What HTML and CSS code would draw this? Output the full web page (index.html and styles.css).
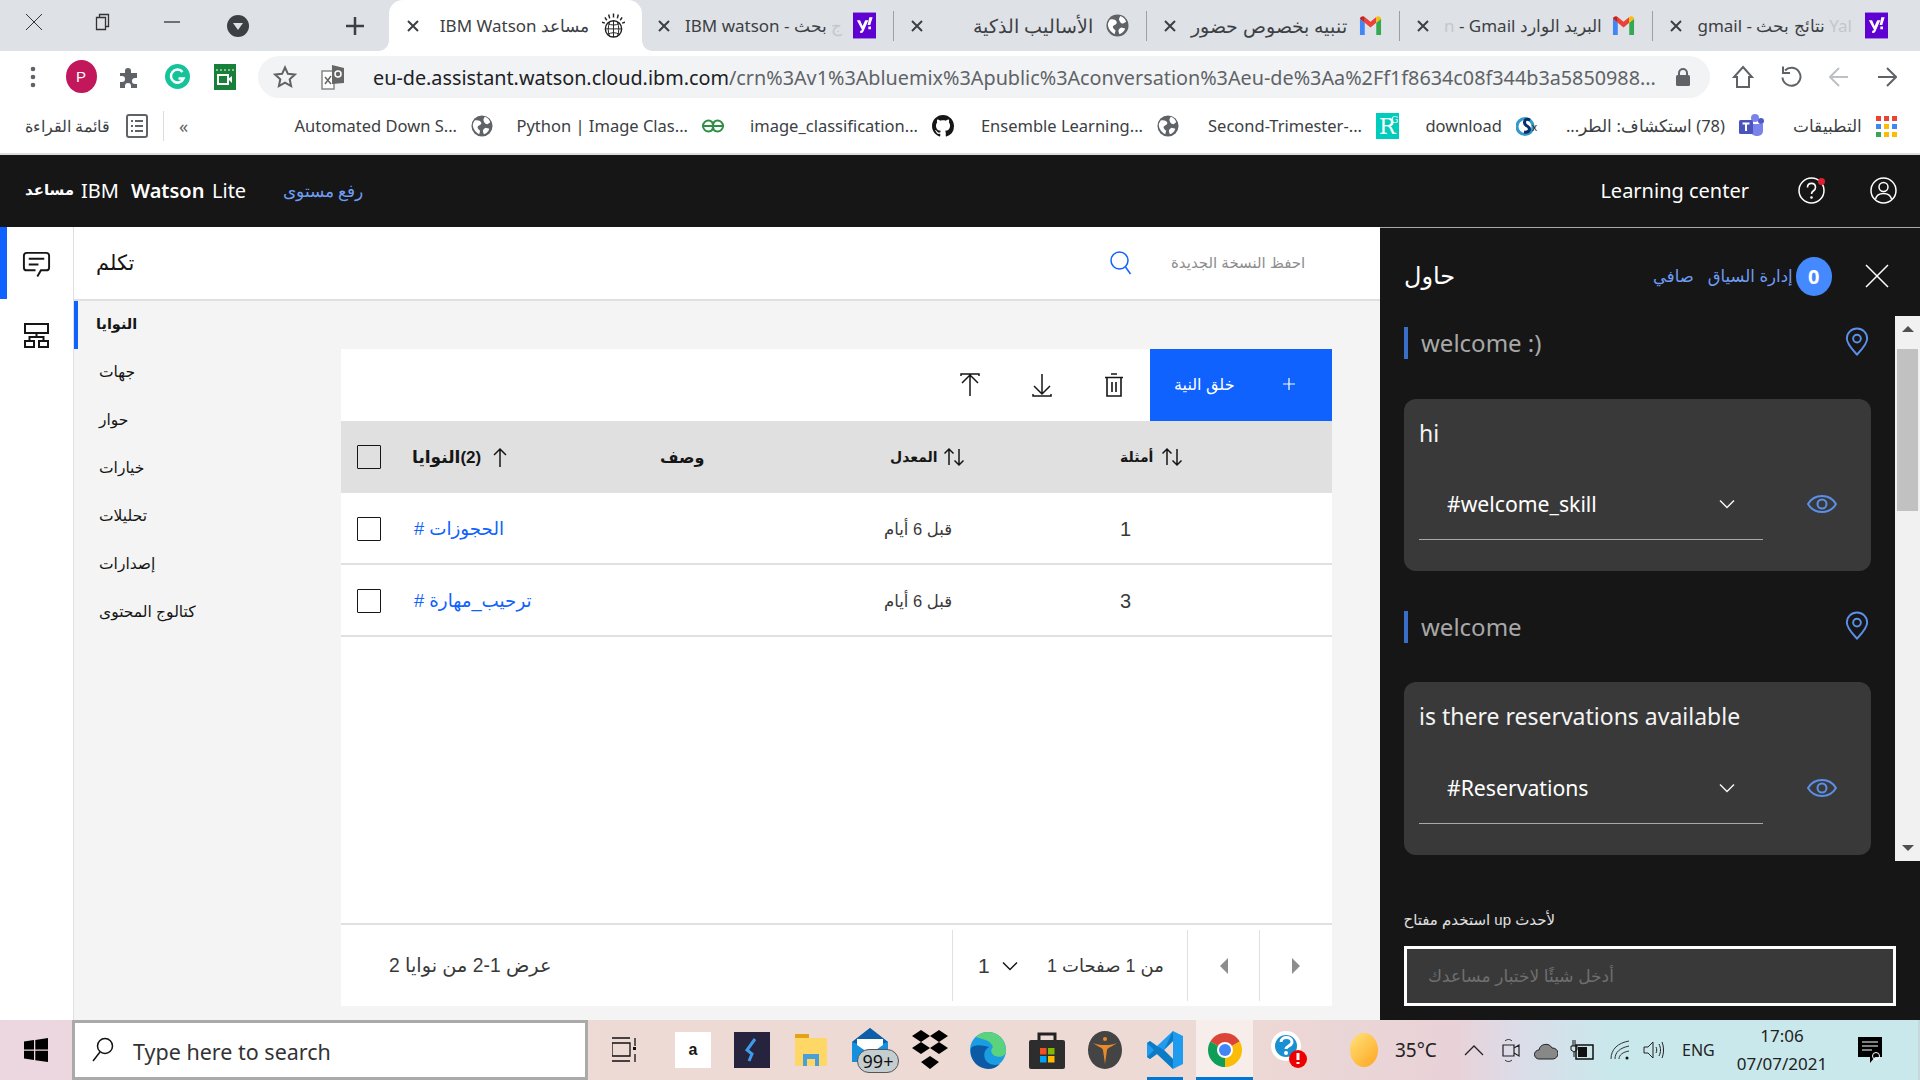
FILE: index.html
```html
<!DOCTYPE html>
<html lang="ar">
<head>
<meta charset="utf-8">
<title>IBM Watson مساعد</title>
<link rel="stylesheet" href="styles.css">
</head>
<body dir="ltr">
<svg class="defs" width="0" height="0">
  <symbol id="globe" viewBox="0 0 24 24"><circle cx="12" cy="12" r="11.500" fill="#5f6368"/><path d="M4 6c3-1 6 0 7 2s-1 3-3 4 0 4 2 5l-1 4C5 19 2 15 2 11c0-2 1-3 2-5zM15 2c3 1 5 3 6 6l-3 2c-2 0-3-1-4-3s0-3 1-5zM16 14l4 1c-1 3-3 5-6 6l-1-3c0-2 1-3 3-4z" fill="#fff"/></symbol>
  <symbol id="yahoo" viewBox="0 0 24 27"><rect width="24" height="27" fill="#5f01d1"/><path d="M4 8h3.400L10 14l2.700-6H16l-5 11.500c-.6 1.300-1.700 2-3.500 1.800v-2.300c1 0 1.500-.2 1.800-1zM17 5h3.500L18 13h-2.700zM16 14.500h2.800v3H16z" fill="#fff"/></symbol>
  <symbol id="gmail" viewBox="0 0 24 24"><path d="M1 22V5l5 4v13z" fill="#4285f4"/><path d="M23 22V5l-5 4v13z" fill="#34a853"/><path d="M6 9V3l6 5 6-5v6l-6 5z" fill="#ea4335"/><path d="M1 5c0-2 3-3.500 5-2v6z" fill="#c5221f"/><path d="M23 5c0-2-3-3.500-5-2v6z" fill="#fbbc04"/></symbol>
  <symbol id="close" viewBox="0 0 16 16"><path d="M3 3l10 10M13 3L3 13" stroke="#3c4043" stroke-width="2" fill="none"/></symbol>
  <symbol id="sort" viewBox="0 0 22 20"><path d="M6 18V2M1.500 6.500L6 2l4.500 4.500M16 2v16M11.500 13.500L16 18l4.500-4.500" stroke="#161616" stroke-width="1.500" fill="none"/></symbol>
  <symbol id="pin" viewBox="0 0 24 30"><path d="M12 28.500C7 23 1.500 18 1.500 12a10.500 10.500 0 0 1 21 0c0 6-5.500 11-10.500 16.500z" stroke="#5b8fe8" stroke-width="2" fill="none"/><circle cx="12" cy="12" r="4" stroke="#5b8fe8" stroke-width="2" fill="none"/></symbol>
  <symbol id="eye" viewBox="0 0 30 20"><path d="M1 10C4 5 9 2 15 2s11 3 14 8c-3 5-8 8-14 8S4 15 1 10z" stroke="#5b8fe8" stroke-width="2" fill="none"/><circle cx="15" cy="10" r="4.500" stroke="#5b8fe8" stroke-width="2" fill="none"/></symbol>
  <symbol id="chev" viewBox="0 0 16 10"><path d="M1 1.500l7 7 7-7" stroke="currentColor" stroke-width="1.500" fill="none"/></symbol>
</svg>

<div class="page">
  <header class="tabstrip">
    <div class="winctl ctl-close"><svg width="18" height="18" viewBox="0 0 18 18"><path d="M1 1l16 16M17 1L1 17" stroke="#333" stroke-width="1"/></svg></div>
    <div class="winctl ctl-restore"><svg width="16" height="18" viewBox="0 0 16 18"><path d="M1.500 4.500h9v12h-9zM4.500 4.500v-3h9v12h-3" stroke="#333" fill="none" stroke-width="1.300"/></svg></div>
    <div class="winctl ctl-min"><svg width="16" height="2" viewBox="0 0 16 2"><path d="M0 1h16" stroke="#333" stroke-width="1.300"/></svg></div>
    <div class="winctl ctl-drop"><svg width="22" height="22" viewBox="0 0 22 22"><circle cx="11" cy="11" r="11" fill="#3c4043"/><path d="M6 8h10l-5 7z" fill="#dee1e6"/></svg></div>
    <div class="winctl ctl-new"><svg width="20" height="20" viewBox="0 0 20 20"><path d="M10 1v18M1 10h18" stroke="#3c4043" stroke-width="2.500"/></svg></div>

    <div class="tab tab-active">
      <svg class="tab-x" width="16" height="16"><use href="#close"/></svg>
      <span class="tab-title">IBM Watson مساعد</span>
      <svg class="fav" width="23" height="26" viewBox="0 0 24 26"><circle cx="12" cy="16" r="8.500" fill="none" stroke="#222" stroke-width="1.500"/><path d="M3.500 16h17M12 7.500v17M6 10.500c4 2 8 2 12 0M6 21.500c4-2 8-2 12 0M8 9c-2 5-2 10 0 15M16 9c2 5 2 10 0 15" stroke="#222" fill="none"/><path d="M12 0v4M7 1l1 4M17 1l-1 4M3 4l2 3M21 4l-2 3M0 9l3 1M24 9l-3 1" stroke="#222" stroke-width="1.500"/></svg>
    </div>
    <div class="tab">
      <svg class="tab-x" width="16" height="16"><use href="#close"/></svg>
      <span class="tab-title">IBM watson - <span class="fade">ج</span> بحث</span>
      <svg class="fav" width="23" height="27"><use href="#yahoo"/></svg>
    </div>
    <i class="tab-sep"></i>
    <div class="tab">
      <svg class="tab-x" width="16" height="16"><use href="#close"/></svg>
      <span class="tab-title tab-ar">الأساليب الذكية</span>
      <svg class="fav" width="23" height="23"><use href="#globe"/></svg>
    </div>
    <i class="tab-sep"></i>
    <div class="tab">
      <svg class="tab-x" width="16" height="16"><use href="#close"/></svg>
      <span class="tab-title tab-ar">تنبيه بخصوص حضور</span>
      <svg class="fav" width="23" height="23"><use href="#gmail"/></svg>
    </div>
    <i class="tab-sep"></i>
    <div class="tab">
      <svg class="tab-x" width="16" height="16"><use href="#close"/></svg>
      <span class="tab-title"><span class="fade">n</span> - Gmail البريد الوارد</span>
      <svg class="fav" width="23" height="23"><use href="#gmail"/></svg>
    </div>
    <i class="tab-sep"></i>
    <div class="tab">
      <svg class="tab-x" width="16" height="16"><use href="#close"/></svg>
      <span class="tab-title">gmail - نتائج بحث <span class="fade">Yal</span></span>
      <svg class="fav" width="23" height="27"><use href="#yahoo"/></svg>
    </div>
  </header>

  <nav class="toolbar">
    <div class="tool"><svg width="6" height="24" viewBox="0 0 6 24"><circle cx="3" cy="4" r="2.300" fill="#5f6368"/><circle cx="3" cy="12" r="2.300" fill="#5f6368"/><circle cx="3" cy="20" r="2.300" fill="#5f6368"/></svg></div>
    <div class="tool"><span class="avatar">P</span></div>
    <div class="tool"><svg width="24" height="24" viewBox="0 0 24 24"><path d="M3 8h5V6a3 3 0 0 1 6 0v2h6v5h-2a3 3 0 0 0 0 6h2v4h-6v-2a3 3 0 0 0-6 0v2H3v-6h2a3 3 0 0 0 0-6H3z" fill="#5f6368"/></svg></div>
    <div class="tool"><svg width="25" height="25" viewBox="0 0 25 25"><circle cx="12.500" cy="12.500" r="12.500" fill="#15c39a"/><path d="M17.500 8a6.500 6.500 0 1 0 1 6.500h-5" stroke="#fff" stroke-width="2.500" fill="none"/></svg></div>
    <div class="tool"><svg width="22" height="26" viewBox="0 0 22 26"><rect width="22" height="26" fill="#188038"/><path d="M2 6h18" stroke="#fff" stroke-dasharray="2 2"/><rect x="4" y="11" width="10" height="9" fill="none" stroke="#fff" stroke-width="2"/><path d="M14 15l4-3v7z" fill="#fff"/></svg></div>
    <div class="omnibox">
      <div class="tool"><svg width="24" height="24" viewBox="0 0 24 24"><path d="M12 2.500l2.900 6.300 6.900.8-5.100 4.700 1.400 6.800L12 17.700 5.900 21.100l1.400-6.800L2.200 9.600l6.900-.8z" stroke="#5f6368" stroke-width="2" fill="none"/></svg></div>
      <div class="tool"><svg width="24" height="26" viewBox="0 0 24 26"><path d="M1 7h12v18H1z" fill="#fff" stroke="#888" stroke-width="1.500"/><path d="M11 1l12 3v15l-12 1z" fill="#666"/><circle cx="17" cy="10" r="3" fill="none" stroke="#fff" stroke-width="1.500"/><path d="M4 13l6 7M10 12l-6 8" stroke="#666" stroke-width="1.500"/></svg></div>
      <div class="url"><span class="url-host">eu-de.assistant.watson.cloud.ibm.com</span>/crn%3Av1%3Abluemix%3Apublic%3Aconversation%3Aeu-de%3Aa%2Ff1f8634c08f344b3a5850988...</div>
      <div class="tool-lock"><svg width="14" height="18" viewBox="0 0 14 18"><path d="M3 7V5a4 4 0 0 1 8 0v2" stroke="#5f6368" stroke-width="2" fill="none"/><rect y="7" width="14" height="11" rx="1.500" fill="#5f6368"/></svg></div>
    </div>
    <div class="tool-right">
      <div class="tool"><svg width="22" height="24" viewBox="0 0 22 24"><path d="M11 2l9 10h-3v10H5V12H2z" stroke="#5f6368" stroke-width="2" fill="none"/></svg></div>
      <div class="tool"><svg width="22" height="24" viewBox="0 0 22 24"><path d="M5 5.500a9 9 0 1 1-2.500 7" stroke="#5f6368" stroke-width="2" fill="none"/><path d="M3 1.500V8h7" stroke="#5f6368" stroke-width="2" fill="none"/></svg></div>
      <div class="tool"><svg width="20" height="22" viewBox="0 0 20 22"><path d="M19 11H2M10 2l-9 9 9 9" stroke="#bdc1c6" stroke-width="2" fill="none"/></svg></div>
      <div class="tool"><svg width="20" height="22" viewBox="0 0 20 22"><path d="M1 11h17M10 2l9 9-9 9" stroke="#5f6368" stroke-width="2" fill="none"/></svg></div>
    </div>
  </nav>

  <div class="bookmarks">
    <div class="bm bm-reading"><span>قائمة القراءة</span>
      <svg width="22" height="24" viewBox="0 0 22 24"><rect x="1" y="1" width="20" height="22" rx="2" fill="none" stroke="#5f6368" stroke-width="2"/><path d="M5 7h2M9 7h8M5 12h2M9 12h8M5 17h2M9 17h8" stroke="#5f6368" stroke-width="2"/></svg>
    </div>
    <i class="bm-sep"></i>
    <div class="bm-more">«</div>
    <div class="bm bm-auto"><span>Automated Down S...</span><svg width="22" height="22"><use href="#globe"/></svg></div>
    <div class="bm bm-python"><span>Python | Image Clas...</span><svg width="22" height="14" viewBox="0 0 22 14"><path d="M0 7h22M11 7C11 3 9 1.500 6.500 1.500a5.500 5.500 0 0 0 0 11c2.500 0 4.500-1.500 4.500-5.500zM11 7c0-4 2-5.500 4.500-5.500a5.500 5.500 0 0 1 0 11C13 12.500 11 11 11 7z" stroke="#2f8d46" stroke-width="2" fill="none"/></svg></div>
    <div class="bm bm-image"><span>image_classification...</span><svg width="22" height="22" viewBox="0 0 16 16"><path fill="#161616" d="M8 0C3.580 0 0 3.580 0 8c0 3.540 2.290 6.530 5.470 7.590.4.070.55-.17.55-.38 0-.19-.01-.82-.01-1.490-2.010.37-2.530-.49-2.690-.94-.09-.23-.48-.94-.82-1.130-.28-.15-.68-.52-.01-.53.63-.01 1.080.58 1.230.82.72 1.210 1.870.87 2.330.66.070-.52.280-.87.510-1.070-1.780-.2-3.640-.89-3.640-3.950 0-.87.310-1.590.820-2.150-.08-.2-.36-1.020.08-2.120 0 0 .67-.21 2.200.82.64-.18 1.320-.27 2-.27s1.360.09 2 .27c1.530-1.040 2.200-.82 2.200-.82.440 1.100.160 1.920.080 2.120.51.560.820 1.270.820 2.150 0 3.070-1.870 3.750-3.650 3.950.290.250.540.730.540 1.480 0 1.070-.01 1.930-.01 2.200 0 .21.150.460.550.380A8.010 8.010 0 0 0 16 8c0-4.420-3.580-8-8-8z"/></svg></div>
    <div class="bm bm-ensemble"><span>Ensemble Learning...</span><svg width="22" height="22"><use href="#globe"/></svg></div>
    <div class="bm bm-second"><span>Second-Trimester-...</span><svg class="rg" width="23" height="26" viewBox="0 0 23 26"><rect width="23" height="26" fill="#00ccbb"/><text x="3" y="21" class="rg-r">R</text><text x="15" y="10" class="rg-g">G</text></svg></div>
    <div class="bm bm-download"><span>download</span><svg width="23" height="23" viewBox="0 0 23 23"><circle cx="9" cy="11.500" r="8" fill="none" stroke="#3499cd" stroke-width="3"/><path d="M14 5c-6-3-7 4-3 6s3 7-3 6" stroke="#092e6e" stroke-width="3" fill="none"/><text x="16" y="16" class="sk-x">x</text></svg></div>
    <div class="bm bm-teams"><span class="rtl">(78) استكشاف: الطر...</span><svg width="25" height="26" viewBox="0 0 25 26"><circle cx="16" cy="5" r="4" fill="#7b83eb"/><circle cx="22" cy="8" r="3" fill="#5059c9"/><path d="M12 11h12v7a5 5 0 0 1-5 5h-2a5 5 0 0 1-5-5z" fill="#7b83eb"/><rect y="7" width="14" height="14" rx="1.500" fill="#4b53bc"/><path d="M3.500 10.500h7M7 10.500V18" stroke="#fff" stroke-width="2"/></svg></div>
    <div class="bm bm-apps"><span>التطبيقات</span><svg width="21" height="21" viewBox="0 0 21 21"><g><rect width="5" height="5" fill="#ea4335"/><rect x="8" width="5" height="5" fill="#ea4335"/><rect x="16" width="5" height="5" fill="#ea4335"/><rect y="8" width="5" height="5" fill="#4285f4"/><rect x="8" y="8" width="5" height="5" fill="#fbbc04"/><rect x="16" y="8" width="5" height="5" fill="#4285f4"/><rect y="16" width="5" height="5" fill="#34a853"/><rect x="8" y="16" width="5" height="5" fill="#fbbc04"/><rect x="16" y="16" width="5" height="5" fill="#fbbc04"/></g></svg></div>
  </div>

  <div class="appbar">
    <div class="brand"><strong class="brand-ar">مساعد</strong><span class="brand-ibm">IBM</span><strong class="brand-w">Watson</strong><span class="brand-lite">Lite</span></div>
    <a class="upgrade">رفع مستوى</a>
    <div class="appbar-right">
      <span class="learn">Learning center</span>
      <span class="help-wrap"><svg width="27" height="27" viewBox="0 0 27 27"><circle cx="13.500" cy="13.500" r="12.500" fill="none" stroke="#fff" stroke-width="1.500"/><path d="M9.500 10.500c0-5.500 8-5.500 8 0 0 3.500-4 3-4 6.500" fill="none" stroke="#fff" stroke-width="1.600"/><circle cx="13.500" cy="20.500" r="1.300" fill="#fff"/></svg><i class="help-dot"></i></span>
      <svg class="user" width="27" height="27" viewBox="0 0 27 27"><circle cx="13.500" cy="13.500" r="12.500" fill="none" stroke="#fff" stroke-width="1.500"/><circle cx="13.500" cy="10" r="4.500" fill="none" stroke="#fff" stroke-width="1.500"/><path d="M5.500 22c1-4 4-5.500 8-5.500s7 1.500 8 5.500" fill="none" stroke="#fff" stroke-width="1.500"/></svg>
    </div>
  </div>

  <main class="work">
    <aside class="rail">
      <div class="rail-item rail-active"><svg width="31" height="31" viewBox="0 0 32 32"><path fill="#161616" d="M17.740 30 16 29l4-7h6a2 2 0 0 0 2-2V8a2 2 0 0 0-2-2H6a2 2 0 0 0-2 2v12a2 2 0 0 0 2 2h9v2H6a4 4 0 0 1-4-4V8a4 4 0 0 1 4-4h20a4 4 0 0 1 4 4v12a4 4 0 0 1-4 4h-4.840Z"/><path fill="#161616" d="M8 10h16v2H8zM8 16h10v2H8z"/></svg></div>
      <div class="rail-item"><svg width="25" height="25" viewBox="0 0 25 25"><path d="M1 1h23v9H1zM1 18h9v6H1zM15 18h9v6h-9zM12.500 10v4M5.500 18v-4h14v4" fill="none" stroke="#161616" stroke-width="2"/></svg></div>
    </aside>

    <section class="content">
      <div class="topbar">
        <h1 class="page-title">تكلم</h1>
        <svg class="search" width="22" height="24" viewBox="0 0 22 24"><circle cx="9.500" cy="9.500" r="8.500" fill="none" stroke="#0f62fe" stroke-width="1.500"/><path d="M15.500 16l5 7" stroke="#0f62fe" stroke-width="1.500"/></svg>
        <span class="save-new">احفظ النسخة الجديدة</span>
      </div>
      <div class="body">
        <ul class="subnav">
          <li class="sub-active">النوايا</li>
          <li>جهات</li>
          <li>حوار</li>
          <li>خيارات</li>
          <li>تحليلات</li>
          <li>إصدارات</li>
          <li>كتالوج المحتوى</li>
        </ul>
        <div class="tablewrap">
          <div class="tablecard">
            <div class="actions">
              <span class="act"><svg width="20" height="24" viewBox="0 0 20 24"><path d="M1 3V1h18v2M10 23V3M2 10l8-8 8 8" fill="none" stroke="#161616" stroke-width="1.500"/></svg></span>
              <span class="act"><svg width="20" height="24" viewBox="0 0 20 24"><path d="M1 21v2h18v-2M10 1v20M2 13l8 8 8-8" fill="none" stroke="#161616" stroke-width="1.500"/></svg></span>
              <span class="act"><svg width="18" height="24" viewBox="0 0 18 24"><path d="M0 4.500h18M6 1h6M2 4.500V23h14V4.500M7 9v10M11 9v10" fill="none" stroke="#161616" stroke-width="1.600"/></svg></span>
              <button class="create"><span class="rtl">خلق النية</span><svg width="12" height="12" viewBox="0 0 12 12"><path d="M6 0v12M0 6h12" stroke="#fff" stroke-width="1.200"/></svg></button>
            </div>
            <div class="row head">
              <span class="cb"></span>
              <span class="th th-name"><b class="rtl">(2)النوايا</b><svg width="14" height="20" viewBox="0 0 14 20"><path d="M7 20V2M1 8l6-6 6 6" fill="none" stroke="#161616" stroke-width="1.500"/></svg></span>
              <span class="th th-desc"><b>وصف</b></span>
              <span class="th th-mod"><b>المعدل</b><svg width="22" height="20"><use href="#sort"/></svg></span>
              <span class="th"><b>أمثلة</b><svg width="22" height="20"><use href="#sort"/></svg></span>
            </div>
            <div class="row">
              <span class="cb cb-white"></span>
              <a class="link">الحجوزات #</a>
              <span></span>
              <span class="cell">قبل 6 أيام</span>
              <span class="cell num">1</span>
            </div>
            <div class="row">
              <span class="cb cb-white"></span>
              <a class="link">ترحيب_مهارة #</a>
              <span></span>
              <span class="cell">قبل 6 أيام</span>
              <span class="cell num">3</span>
            </div>
            <div class="spacer"></div>
            <div class="pager">
              <span class="pager-info rtl">عرض 1-2 من نوايا 2</span>
              <div class="pager-select">
                <span class="pager-num">1</span>
                <svg class="pager-chev" width="16" height="10"><use href="#chev"/></svg>
                <span class="pager-of rtl">من 1 صفحات 1</span>
              </div>
              <div class="pager-btn"><svg width="8" height="16" viewBox="0 0 8 16"><path d="M8 0v16L0 8z" fill="#8d8d8d"/></svg></div>
              <div class="pager-btn"><svg width="8" height="16" viewBox="0 0 8 16"><path d="M0 0v16l8-8z" fill="#8d8d8d"/></svg></div>
            </div>
          </div>
        </div>
      </div>
    </section>

    <aside class="panel">
      <div class="panel-head">
        <h2 class="panel-title">حاول</h2>
        <a class="panel-link">صافي</a>
        <a class="panel-link panel-ctx">إدارة السياق</a>
        <span class="badge">0</span>
        <svg class="panel-x" width="24" height="24" viewBox="0 0 24 24"><path d="M1 1l22 22M23 1L1 23" stroke="#fff" stroke-width="1.500"/></svg>
      </div>
      <div class="scrollarea">
        <div class="log">
          <div class="bot"><span class="bot-text">welcome :)</span><svg width="24" height="29"><use href="#pin"/></svg></div>
          <div class="card">
            <p class="said">hi</p>
            <div class="intent-row">
              <div class="intent"><span>#welcome_skill</span><svg width="16" height="10"><use href="#chev"/></svg></div>
              <svg width="30" height="20"><use href="#eye"/></svg>
            </div>
          </div>
          <div class="bot"><span class="bot-text">welcome</span><svg width="24" height="29"><use href="#pin"/></svg></div>
          <div class="card">
            <p class="said">is there reservations available</p>
            <div class="intent-row">
              <div class="intent"><span>#Reservations</span><svg width="16" height="10"><use href="#chev"/></svg></div>
              <svg width="30" height="20"><use href="#eye"/></svg>
            </div>
          </div>
        </div>
        <div class="scrollbar">
          <i class="sb-up"></i>
          <i class="sb-thumb"></i>
          <i class="sb-down"></i>
        </div>
      </div>
      <p class="hint rtl">لأحدث up استخدم مفتاح</p>
      <div class="inputbox"><span class="rtl">أدخل شيئًا لاختبار مساعدك</span></div>
    </aside>
  </main>

  <footer class="taskbar">
    <div class="tb-win"><svg width="24" height="24" viewBox="0 0 24 24"><path d="M0 3.500l10-1.400V11.500H0zM11.300 1.900L24 0v11.500H11.300zM0 12.700h10V22L0 20.500zM11.300 12.700H24V24l-12.700-1.800z" fill="#000"/></svg></div>
    <div class="tb-search"><svg width="22" height="26" viewBox="0 0 22 26"><circle cx="13" cy="9" r="7.500" fill="none" stroke="#111" stroke-width="1.500"/><path d="M8 15L1 24" stroke="#111" stroke-width="1.500"/></svg><span>Type here to search</span></div>
    <div class="tb-icons">
      <span class="tb-i i-view"><svg width="24" height="26" viewBox="0 0 24 26"><path d="M0 1h18M0 6h18v13H0zM0 24h18M23 1v8M23 17v8" fill="none" stroke="#111" stroke-width="1.300"/><rect x="21" y="10" width="3" height="3" fill="#111"/></svg></span>
      <span class="tb-i i-amazon"><b>a</b></span>
      <span class="tb-i i-next"><svg width="36" height="36" viewBox="0 0 36 36"><rect width="36" height="36" fill="#26233f"/><path d="M21 7l-8 11 5 4-3 7" fill="none" stroke="#3d9be9" stroke-width="3"/></svg></span>
      <span class="tb-i i-folder"><svg width="32" height="34" viewBox="0 0 32 34"><path d="M0 1h14v8H0z" fill="#e0a416"/><path d="M0 5h32v28H0z" fill="#ffd766"/><path d="M8 33V21h16v12h-4v-7h-8v7z" fill="#4a9fd8"/></svg></span>
      <span class="tb-i i-mail"><svg width="36" height="44" viewBox="0 0 36 44"><path d="M18 0l18 14v20H0V14z" fill="#1490df"/><path d="M18 0l18 14-18 6L0 14z" fill="#0f5ea8"/><path d="M5 11h26v6l-13 9-13-9z" fill="#fff"/></svg><em class="mail-badge">99+</em></span>
      <span class="tb-i i-dropbox"><svg width="36" height="40" viewBox="0 0 36 40"><path d="M9 0l9 6-9 6-9-6zM27 0l9 6-9 6-9-6zM9 12l9 6-9 6-9-6zM27 12l9 6-9 6-9-6zM18 26l9 6-9 7-9-7z" fill="#000"/></svg></span>
      <span class="tb-i i-edge"><svg width="36" height="38" viewBox="0 0 36 38"><circle cx="18" cy="19" r="18" fill="#1b9de2"/><path d="M6 6c9-10 30-5 30 14 0 5-6 7-11 5-4-2-5-6-2-9C20 8 10 8 6 6z" fill="#5ad27e"/><path d="M1 17c-2 12 7 21 17 21 5 0 9-2 12-5-5 2-12 1-15-5-2-5 0-10 4-12-7-2-15-3-18 1z" fill="#0c59a4"/></svg></span>
      <span class="tb-i i-store"><svg width="36" height="38" viewBox="0 0 36 38"><path d="M10 9V3h16v6" fill="none" stroke="#222" stroke-width="3"/><rect y="9" width="36" height="29" rx="2" fill="#2d2d2d"/><rect x="11" y="17" width="6.500" height="6.500" fill="#f25022"/><rect x="19" y="17" width="6.500" height="6.500" fill="#7fba00"/><rect x="11" y="25" width="6.500" height="6.500" fill="#00a4ef"/><rect x="19" y="25" width="6.500" height="6.500" fill="#ffb900"/></svg></span>
      <span class="tb-i i-dark"><svg width="34" height="38" viewBox="0 0 34 38"><ellipse cx="17" cy="19" rx="17" ry="19" fill="#444"/><circle cx="17" cy="8" r="2" fill="#e88a2a"/><path d="M5 12c6 2 8 2 12 2s6 0 12-2c-5 4-9 4-10 7l-2 14-2-14c-1-3-5-3-10-7z" fill="#e88a2a"/></svg></span>
      <span class="tb-i i-code"><svg width="36" height="38" viewBox="0 0 36 38"><path d="M26 0l10 5v28l-10 5-16-15-7 5-3-2V12l3-2 7 5zM26 10l-9 9 9 9z" fill="#1f9cf0"/><path d="M26 0v10l-9 9-7-4L3 10l-3 2 7 7-7 7 3 2 7-5 16 15V28l-9-9" fill="#0065a9" opacity=".6"/></svg></span>
      <span class="tb-i i-chrome"><svg width="34" height="36" viewBox="0 0 34 34"><path d="M17 17L2.300 8.500A17 17 0 0 1 31.700 8.500z" fill="#db4437"/><path d="M17 17l14.700-8.500A17 17 0 0 1 17 34z" fill="#fbbc05"/><path d="M17 17v17A17 17 0 0 1 2.300 8.500z" fill="#0f9d58"/><circle cx="17" cy="17" r="8" fill="#fff"/><circle cx="17" cy="17" r="6" fill="#4285f4"/></svg></span>
      <span class="tb-i i-help"><svg width="36" height="42" viewBox="0 0 36 42"><circle cx="15" cy="17" r="15" fill="#fff"/><circle cx="15" cy="17" r="11" fill="#1a8fd1"/><path d="M10 13c0-6 11-6 11 0 0 4-6 4-6 7" fill="none" stroke="#fff" stroke-width="3"/><circle cx="15" cy="24" r="2" fill="#fff"/><circle cx="27" cy="30" r="9" fill="#e00"/><path d="M27 24v7M27 33v2" stroke="#fff" stroke-width="3"/></svg></span>
      <span class="tb-i i-sun"></span>
    </div>
    <div class="tray">
      <span class="temp">35°C</span>
      <svg class="tr-caret" width="20" height="12" viewBox="0 0 20 12"><path d="M1 11l9-9 9 9" fill="none" stroke="#222" stroke-width="1.300"/></svg>
      <svg class="tr-meet" width="18" height="26" viewBox="0 0 18 26"><path d="M1 8h11v11H1zM12 11l5-3v11l-5-3z" fill="none" stroke="#222" stroke-width="1.200"/><path d="M3 4c2-2 5-2 7 0M3 23c2 2 5 2 7 0" fill="none" stroke="#222"/></svg>
      <svg class="tr-cloud" width="24" height="20" viewBox="0 0 24 20"><path d="M5 19a4.500 4.500 0 0 1 0-9 7 7 0 0 1 13-2 5.500 5.500 0 0 1 1 11z" fill="#888" stroke="#222"/></svg>
      <svg class="tr-batt" width="24" height="22" viewBox="0 0 24 22"><path d="M6 6h17v14H6z" fill="none" stroke="#111" stroke-width="1.500"/><rect x="8" y="8" width="9" height="10" fill="#111"/><path d="M1 7h6v4l-3 2-3-2zM3 1v6M5 1v6M4 13v5" fill="none" stroke="#111"/></svg>
      <svg class="tr-wifi" width="20" height="20" viewBox="0 0 20 20"><path d="M1 19C1 9 8 3 19 1M5 19c0-7 5-11 14-13M9 19c0-4 4-7 10-8" fill="none" stroke="#333"/><circle cx="17" cy="18" r="1.500" fill="#111"/></svg>
      <svg class="tr-vol" width="22" height="20" viewBox="0 0 22 20"><path d="M1 7h4l5-5v16l-5-5H1z" fill="none" stroke="#222"/><path d="M13 7c1 2 1 4 0 6M16 4c2 4 2 8 0 12M19 2c2 5 2 11 0 16" fill="none" stroke="#222"/></svg>
      <span class="lang">ENG</span>
      <div class="clock"><span>17:06</span><span>07/07/2021</span></div>
      <svg class="tr-note" width="24" height="27" viewBox="0 0 24 27"><path d="M0 0h24v20h-7l-5 6v-6H0z" fill="#000"/><path d="M4 5h16M4 9h16M4 13h10" stroke="#fff"/><circle cx="18" cy="19" r="3.500" fill="none" stroke="#fff"/></svg>
    </div>
  </footer>
</div>
</body>
</html>
```
FILE: styles.css
```css
* { box-sizing: border-box; }
html, body { margin: 0; height: 100%; overflow: hidden; }
body { font-family: "Liberation Sans", "DejaVu Sans", sans-serif; color: #161616; background: #fff; }
.defs { position: absolute; }
.page { width: 1920px; height: 1080px; display: flex; flex-direction: column; }
.rtl { direction: rtl; unicode-bidi: isolate; }
svg { display: block; flex: none; }

/* Tab strip */
.tabstrip { height: 51px; flex: none; background: #dee1e6; display: flex; align-items: stretch; }
.winctl { display: flex; align-items: center; justify-content: center; }
.ctl-close { width: 68px; padding-bottom: 8px; }
.ctl-restore { width: 70px; padding-bottom: 8px; }
.ctl-min { width: 68px; padding-bottom: 8px; }
.ctl-drop { width: 64px; }
.ctl-new { width: 119px; padding-left: 51px; }
.tab { width: 251px; flex: none; display: flex; align-items: center; padding: 0 17px 0 14px; gap: 13px; font: 17px "Noto Sans", "Liberation Sans", sans-serif; color: #3c4043; }
.tab-active { width: 253px; background: #fff; border-radius: 14px 14px 0 0; padding-left: 16px; color: #3c4043; position: relative; }
.tab-active::before, .tab-active::after { content: ""; position: absolute; bottom: 0; width: 10px; height: 10px; }
.tab-active::before { left: -10px; background: radial-gradient(circle at 0 0, #dee1e6 9.500px, #fff 10px); }
.tab-active::after { right: -10px; background: radial-gradient(circle at 100% 0, #dee1e6 9.500px, #fff 10px); }
.tab-title { flex: 1; min-width: 0; text-align: right; white-space: nowrap; line-height: 24px; }
.tab-ar { font-size: 18.500px; }
.tab-title .fade { color: #c5c7cb; }
.tab-sep { width: 1px; height: 30px; align-self: center; background: #9aa0a6; flex: none; margin: 0 1px 0 0; }

/* Toolbar */
.toolbar { height: 51px; flex: none; background: #fff; display: flex; align-items: center; padding-left: 9px; }
.tool { width: 48px; height: 42px; flex: none; display: flex; align-items: center; justify-content: center; }
.avatar { width: 31px; height: 33px; border-radius: 50%; background: #c2185b; color: #fff; font: 15px "Liberation Sans", sans-serif; display: flex; align-items: center; justify-content: center; }
.omnibox { margin-left: 9px; width: 1452px; height: 42px; border-radius: 21px; background: #f1f3f4; display: flex; align-items: center; padding-left: 3px; flex: none; }
.url { margin-left: 16px; width: 1284px; padding-top: 2px; white-space: nowrap; overflow: hidden; font: 19.800px/28px "Noto Sans", sans-serif; color: #5f6368; }
.url-host { color: #202124; }
.tool-lock { width: 52px; display: flex; justify-content: center; }
.tool-right { display: flex; margin-left: 9px; }

/* Bookmarks */
.bookmarks { height: 53px; flex: none; background: #fff; border-bottom: 2px solid #dadce0; display: flex; align-items: center; padding: 0 0 3px 22px; font: 16.500px/24px "Noto Sans", "Liberation Sans", sans-serif; color: #3c4043; }
.bm { display: flex; align-items: center; justify-content: flex-end; gap: 14px; white-space: nowrap; flex: none; }
.bm-sep { width: 1px; height: 30px; background: #dadce0; margin: 0 15px; flex: none; }
.bm-more { width: 12px; font-size: 18px; color: #5f6368; margin-right: 98px; flex: none; }
.bm-reading { width: 126px; gap: 16px; font-size: 16px; }
.bm-auto { width: 204px; margin-right: 26px; }
.bm-python { width: 205px; margin-right: 26px; }
.bm-image { width: 204px; margin-right: 26px; }
.bm-ensemble { width: 199px; margin-right: 25px; }
.bm-second { width: 195px; margin-right: 25px; }
.bm-download { width: 115px; margin-right: 25px; }
.bm-teams { width: 200px; margin-right: 24px; }
.bm-apps { width: 109px; }
.rg-r { font: 22px "DejaVu Serif", serif; fill: #fff; }
.rg-g { font: 9px "DejaVu Serif", serif; fill: #fff; }
.sk-x { font: 10px "Liberation Sans", sans-serif; fill: #222; }

/* App bar */
.appbar { height: 72px; flex: none; background: #161616; color: #fff; display: flex; align-items: center; padding-bottom: 2px; font: 20px "Noto Sans", "Liberation Sans", sans-serif; }
.brand { display: flex; align-items: center; width: 283px; padding-left: 25px; }
.brand-ar { font: 700 15px "Liberation Sans", "DejaVu Sans", sans-serif; width: 56px; }
.brand-ibm { width: 50px; }
.brand-w { font-weight: 600; width: 81px; }
.upgrade { font-size: 17px; color: #6f9df5; }
.appbar-right { margin-left: auto; display: flex; align-items: center; padding-right: 23px; }
.learn { margin-right: 49px; }
.help-wrap { position: relative; margin-right: 45px; }
.help-dot { position: absolute; right: 0; top: 1px; width: 7px; height: 7px; border-radius: 50%; background: #e0202e; }

/* Work area */
.work { flex: 1; display: flex; min-height: 0; }
.rail { width: 74px; flex: none; border-right: 1px solid #e0e0e0; background: #fff; }
.rail-item { height: 72px; display: flex; align-items: center; justify-content: center; padding-right: 1px; }
.rail-active { box-shadow: inset 7px 0 0 #0f62fe; }
.content { width: 1306px; flex: none; display: flex; flex-direction: column; }
.topbar { height: 74px; flex: none; border-bottom: 2px solid #e0e0e0; display: flex; align-items: center; padding: 0 0 1px 22px; background: #fff; }
.page-title { margin: 0; font: 400 21px "Liberation Sans", "DejaVu Sans", sans-serif; width: 1014px; }
.save-new { margin-left: 39px; font-size: 15px; color: #8d8d8d; }
.search { flex: none; }
.body { flex: 1; display: flex; background: #f4f4f4; min-height: 0; }
.subnav { width: 267px; flex: none; list-style: none; margin: 0; padding: 0; font-size: 15.500px; }
.subnav li { height: 48px; display: flex; align-items: center; padding: 0 0 2px 25px; }
.subnav .sub-active { font-weight: 700; font-size: 14.500px; border-left: 4px solid #0f62fe; padding-left: 18px; }
.tablewrap { width: 991px; flex: none; padding-top: 48px; padding-bottom: 14px; display: flex; }
.tablecard { flex: 1; display: flex; flex-direction: column; background: #fff; }
.actions { height: 72px; flex: none; display: flex; justify-content: flex-end; align-items: center; }
.act { width: 72px; display: flex; justify-content: center; }
.create { width: 182px; height: 72px; border: 0; background: #0f62fe; color: #fff; display: flex; align-items: center; justify-content: space-between; padding: 0 37px 2px 24px; font: 16px "Liberation Sans", "DejaVu Sans", sans-serif; }
.row { height: 72px; flex: none; display: grid; grid-template-columns: 71px 248px 224px 236px 1fr; align-items: center; border-bottom: 2px solid #e0e0e0; padding-top: 2px; font-size: 16.500px; }
.head { background: #e0e0e0; border-bottom: 0; padding-top: 0; }
.cb { width: 24px; height: 24px; margin-left: 16px; border: 1px solid #161616; border-radius: 1px; }
.cb-white { background: #fff; }
.th { display: flex; align-items: center; gap: 8px; font-size: 14px; }
.th-name { gap: 12px; font-size: 17px; }
.th-desc { font-size: 16px; }
.th-mod { padding-left: 6px; gap: 5px; }
.link { color: #0f62fe; font-size: 18.300px; white-space: nowrap; direction: rtl; justify-self: start; padding-left: 2px; }
.cell { color: #393939; }
.num { font-size: 20px; }
.spacer { flex: 1; }
.pager { height: 83px; flex: none; border-top: 2px solid #e0e0e0; display: flex; align-items: stretch; color: #393939; font-size: 18px; }
.pager-info { width: 611px; padding-left: 48px; display: flex; align-items: center; justify-content: flex-end; font-size: 19.300px; }
.pager-select { width: 235px; border-left: 1px solid #e0e0e0; display: flex; align-items: center; margin: 5px 0; padding-left: 25px; }
.pager-num { font-size: 21px; width: 24px; }
.pager-chev { color: #161616; margin-right: 29px; }
.pager-of { white-space: nowrap; }
.pager-btn { width: 72px; border-left: 1px solid #e0e0e0; margin: 5px 0; display: flex; align-items: center; justify-content: center; }

/* Try panel */
.panel { width: 540px; flex: none; background: #161616; border-top: 1px solid #a8a8a8; color: #fff; padding-left: 24px; display: flex; flex-direction: column; }
.panel-head { height: 88px; flex: none; display: flex; align-items: center; padding: 8px 31px 0 0; }
.panel-title { margin: 0; font: 400 24px "Liberation Sans", "DejaVu Sans", sans-serif; width: 253px; }
.panel-link { font-size: 16.500px; color: #6f9df5; white-space: nowrap; }
.panel-ctx { margin-left: 14px; margin-right: 3px; }
.badge { width: 37px; height: 39px; border-radius: 50%; background: #4589ff; display: flex; align-items: center; justify-content: center; font: 700 20px "Noto Sans", sans-serif; }
.panel-x { margin-left: 33px; }
.scrollarea { height: 545px; flex: none; display: flex; }
.log { width: 467px; flex: none; }
.bot { height: 83px; display: flex; justify-content: space-between; align-items: flex-start; padding: 11px 2px 0 17px; background: linear-gradient(#3a6fc9, #3a6fc9) left 11px / 4px 32px no-repeat; }
.card + .bot { height: 82px; }
.bot-text { font: 24px/32px "Noto Sans", sans-serif; color: #a8a8a8; }
.card { height: 172px; background: #393939; border-radius: 12px; padding: 16px 0 0 15px; margin-bottom: 29px; }
.card:last-child { height: 173px; margin-bottom: 0; }
.card:last-child .intent-row { margin-top: 19px; }
.said { margin: 0; font: 23px/36px "Noto Sans", sans-serif; color: #f4f4f4; }
.intent-row { display: flex; align-items: center; margin-top: 18px; }
.intent { width: 344px; height: 71px; border-bottom: 1px solid #a8a8a8; display: flex; align-items: center; justify-content: space-between; padding: 0 28px 1px 28px; font: 21.200px "Noto Sans", sans-serif; }
.intent svg { color: #f4f4f4; }
.intent-row > svg { margin-left: 44px; margin-bottom: 2px; }
.scrollbar { margin-left: 24px; width: 25px; background: #f1f1f1; display: flex; flex-direction: column; align-items: center; }
.sb-up { width: 0; height: 0; margin-top: 10px; border: 6px solid transparent; border-top: 0; border-bottom: 6px solid #505050; }
.sb-thumb { width: 21px; height: 162px; margin-top: 17px; background: #c1c1c1; }
.sb-down { width: 0; height: 0; margin-top: auto; margin-bottom: 10px; border: 6px solid transparent; border-bottom: 0; border-top: 6px solid #505050; }
.hint { margin: 50px 0 0; height: 35px; width: 151px; font-size: 15px; color: #e0e0e0; white-space: nowrap; }
.inputbox { width: 492px; height: 60px; border: 3px solid #fff; background: #393939; display: flex; align-items: center; padding-left: 21px; font-size: 17px; color: #6f6f6f; }

/* Taskbar */
.taskbar { height: 60px; flex: none; display: flex; align-items: stretch; background: linear-gradient(90deg, #ecd6e0 0, #eedad4 35%, #eedad4 62%, #e8d2d8 76%, #dcdce8 79%, #c9e8ec 84%, #c9e8ec 100%); border-right: 2px solid #c5d8dc; }
.tb-win { width: 72px; flex: none; display: flex; align-items: center; justify-content: center; }
.tb-search { width: 516px; flex: none; background: #fff; border: 3px solid #aaa; display: flex; align-items: center; padding: 2px 0 0 17px; gap: 19px; font: 21.500px "Noto Sans", "Liberation Sans", sans-serif; color: #333; }
.tb-search svg { margin-top: -2px; }
.tb-icons { display: flex; align-items: center; flex: none; }
.tb-i { display: flex; align-items: center; justify-content: center; height: 60px; flex: none; position: relative; }
.i-view { margin-left: 24px; width: 24px; }
.i-amazon { margin-left: 39px; width: 36px; }
.i-amazon b { width: 36px; height: 36px; background: #fff; display: flex; align-items: center; justify-content: center; font: 700 16px "Liberation Sans", sans-serif; }
.i-next { margin-left: 23px; width: 36px; }
.i-folder { margin-left: 25px; width: 32px; }
.i-mail { margin-left: 25px; width: 36px; }
.mail-badge { position: absolute; left: 5px; top: 29px; width: 42px; height: 24px; border-radius: 12px; background: #c4cdd0; border: 1px solid #555; font: 18px/22px "Noto Sans", sans-serif; color: #111; text-align: center; }
.i-dropbox { margin-left: 24px; width: 35px; }
.i-edge { margin-left: 23px; width: 36px; }
.i-store { margin-left: 23px; width: 35px; }
.i-dark { margin-left: 24px; width: 34px; }
.i-code { margin-left: 25px; width: 36px; box-shadow: inset 0 -3px 0 #0078d4; padding: 0 5px; }
.i-chrome { margin-left: 13px; width: 57px; background: #f7eeeb; box-shadow: inset 0 -3px 0 #0078d4; }
.i-help { margin-left: 19px; width: 33px; }
.i-sun { margin-left: 45px; width: 28px; }
.i-sun::before { content: ""; width: 28px; height: 34px; border-radius: 50%; background: linear-gradient(135deg, #ffe27a, #ffa51f); }
.tray { display: flex; align-items: center; flex: 1; font: 19px "Noto Sans", "Liberation Sans", sans-serif; color: #222; }
.temp { margin-left: 17px; width: 48px; }
.tr-caret { margin-left: 21px; }
.tr-meet { margin-left: 18px; }
.tr-cloud { margin-left: 14px; }
.tr-batt { margin-left: 12px; }
.tr-wifi { margin-left: 16px; }
.tr-vol { margin-left: 13px; }
.lang { margin-left: 17px; font-size: 16px; width: 34px; }
.clock { margin-left: 20px; width: 92px; display: flex; flex-direction: column; align-items: center; font-size: 17px; line-height: 28px; }
.tr-note { margin-left: 30px; }
```
